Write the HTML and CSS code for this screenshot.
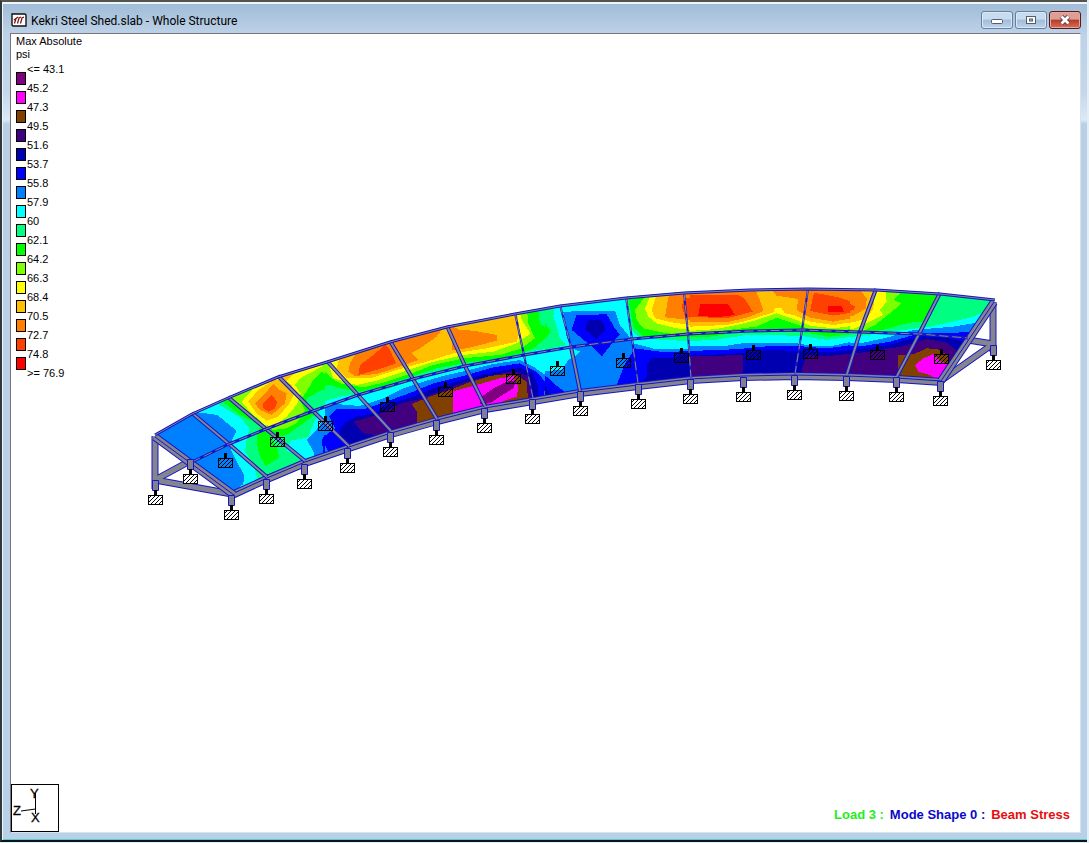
FILE: index.html
```
<!DOCTYPE html>
<html lang="en">
<head>
<meta charset="utf-8">
<title>Kekri Steel Shed.slab - Whole Structure</title>
<link rel="stylesheet" href="styles.css">
</head>
<body>
<div class="window">
  <header class="titlebar">
    <svg class="app-icon" viewBox="0 0 16 14" aria-hidden="true">
      <path d="M1 1H14L15 2V13H2L1 12Z" fill="#fff" stroke="#111" stroke-width="1.4"/>
      <path d="M3 7L7 4M3.500 10.500L5 5.500M6.500 10.500L8 5 10 4M9.500 10.500L11 5 13 4" fill="none" stroke="#7c1010" stroke-width="1.200"/>
    </svg>
    <h1 class="title">Kekri Steel Shed.slab - Whole Structure</h1>
    <div class="controls">
      <button class="control" type="button" aria-label="Minimize"><svg viewBox="0 0 12 10"><rect x=".5" y="4.500" width="11" height="4" rx="1" fill="#fff" stroke="#555d6b"/></svg></button>
      <button class="control" type="button" aria-label="Maximize"><svg viewBox="0 0 12 10"><rect x="1.500" y="1.500" width="9" height="7" fill="#fff" stroke="#555d6b"/><rect x="4.500" y="4" width="3" height="2" fill="#9db8d6" stroke="#555d6b"/></svg></button>
      <button class="control close" type="button" aria-label="Close"><svg viewBox="0 0 12 10"><path d="M2.500 1.500l7 7M9.500 1.500l-7 7" stroke="#54383c" stroke-width="4.500"/><path d="M2.500 1.500l7 7M9.500 1.500l-7 7" stroke="#fff" stroke-width="2.800"/></svg></button>
    </div>
  </header>
  <main class="view">
    <svg class="model" viewBox="11 34 1069 798" preserveAspectRatio="xMidYMid meet" role="img" aria-label="Beam stress contours on the curved slab">
      <defs>
        <pattern id="hatch" width="4" height="4" patternUnits="userSpaceOnUse"><path d="M-1 5L5 -1M-1 1L1 -1M3 5L5 3" stroke="#000" stroke-width="1"/></pattern>
        <g id="box"><rect x="-6.500" y="-4.500" width="14" height="9" fill="url(#hatch)" stroke="#000"/><rect x="-1" y="-10" width="3" height="6" fill="#000"/></g>
        <g id="foot"><path d="M-2.500 -19.500H3.500V-9.500H-2.500Z" fill="#808090" stroke="#1414c8"/><rect x="-6.500" y="-4.500" width="14" height="9" fill="#fff"/><use href="#box"/></g>
        <clipPath id="surface"><path d="M155 434L192 413 228 397 278 376 327 361 390 341 447 326 515 313 560 305 626 297 684 292 750 290 808 289 876 289 940 293 995 300 940 380 897 376 847 374 743 374 691 378 638 383 580 391 533 398 485 406 437 419 391 431 349 446 305 461 267 477 232 494Z"/></clipPath>
        <clipPath id="c1"><rect x="0" y="0" width="556" height="500"/></clipPath>
        <clipPath id="c2"><rect x="15" y="0" width="661" height="500"/></clipPath>
        <clipPath id="c3"><rect x="135" y="0" width="436" height="450"/></clipPath>
        <clipPath id="c4"><rect x="90" y="0" width="481" height="400"/></clipPath>
        <clipPath id="c5"><rect x="90" y="0" width="500" height="400"/></clipPath>
        <path id="rim" d="M155 435L192 414 228 398 278 377 327 362 390 342 447 327 515 314 560 306 626 298 684 293 750 290 808 289 876 290 940 294 995 300"/>
        <path id="mid" d="M192 462L229 444 266 429 313 411 358 395 413 379 465 366 524 355 571 347 632 339 688 334 750 331 802 330 860 332 919 334 968 338"/>
        <path id="front" d="M232 495L267 479 305 463 349 448 391 434 437 421 485 409 533 401 580 393 638 386 691 380 743 377 795 376 847 377 897 379 942 382"/>
        <path id="ribs" d="M192 413L229 444 267 477M228 397L266 429 305 461M278 376L313 411 349 446M327 361L358 395 391 431M390 341L413 379 437 419M447 326L465 366 485 406"/>
        <path id="thin-ribs" d="M515 313L524 355 533 398M560 305L571 347M626 297L632 339 638 383M684 292L688 334 691 378M808 289L802 330 795 374"/>
        <path id="right-ribs" d="M571 347L580 391M876 289L860 332 847 374M940 293L919 334 897 376"/>
        <path id="frames" d="M155 436V489M155 480L190 461M155 480L232 494M993 302V352M968 340L993 344 942 380"/>
        <path id="ends" d="M155 437L234 495M994 302L941 381"/>
      </defs>

      <g clip-path="url(#surface)" shape-rendering="crispEdges">
        <g transform="translate(140 360) scale(.33333)"><g clip-path="url(#c1)">
          <path class="azure" d="M0 0H700V500H0Z"/>
          <path class="cyan" d="M160 155L232 165 260 188 290 212 276 240 270 262 288 300 312 345 310 372 280 395 360 400 700 395V-40H230Z"/>
          <path class="spring" d="M222 125L300 172 328 205 318 245 316 275 340 315 350 345 358 370 440 340 500 300 470 285 438 272 452 242 505 232 520 190 540 150 575 135 620 110 700 100V-20H300Z"/>
          <path class="green" d="M236 115L300 165 340 185 360 200 350 222 352 255 358 285 378 318 418 292 412 265 395 235 440 225 490 190 530 160 505 150 500 115 545 90 600 92 700 90V-30H300Z"/>
          <path class="lime" d="M262 105L310 150 350 190 400 210 440 205 470 190 495 150 480 120 500 95 520 60 545 35 570 60 600 70V0H400Z"/>
          <path class="yellow" d="M305 125L345 80 410 40 550 0 545 20 480 55 465 75 482 100 470 135 440 170 400 200 375 195 330 155Z"/>
          <path class="gold" d="M325 125L355 90 400 60 430 60 455 75 465 95 445 135 415 170 380 182 350 160Z"/>
          <path class="gold" d="M415 45L470 35 440 62Z"/>
          <path class="orange" d="M345 130L375 100 400 72 420 90 440 100 435 130 395 165 360 150Z"/>
          <path class="ember" d="M368 130L395 105 412 125 405 145 385 155 370 145Z"/>
          <path class="azure" d="M575 140L555 175 525 215 500 238 520 275 530 310 640 250V140Z"/>
          <path class="blue" d="M590 165L560 215 545 240 552 290 600 270Z"/>
        </g></g>

        <g transform="translate(320 300) scale(.33333)"><g clip-path="url(#c2)">
          <path class="cyan" d="M-10 0H730V500H-10Z"/>
          <path class="spring" d="M-10 310L60 290 130 280 200 268 270 245 350 222 440 200 530 185 610 168 650 150 700 145 720 110 690 80 680 40 690 0H-10Z"/>
          <path class="green" d="M-10 262L30 255 60 265 120 275 200 255 290 225 350 205 440 188 540 175 600 160 640 145 665 125 695 100 660 70 650 0H-10Z"/>
          <path class="lime" d="M5 170L15 215 35 235 60 250 130 262 190 248 270 222 340 195 430 175 540 165 605 145 645 115 625 70 618 0Z"/>
          <path class="yellow" d="M20 175L40 235 110 255 170 242 260 212 330 188 430 165 520 155 590 130 632 100 605 60 590 0Z"/>
          <path class="gold" d="M60 165L50 205 80 235 150 235 230 210 320 185 400 160 500 145 590 125 600 95 585 0Z"/>
          <path class="orange" d="M120 140L90 190 85 215 105 228 170 222 240 200 295 180 275 158 300 145 350 110 378 70 210 110Z"/>
          <path class="orange" d="M380 70L420 90 460 92 530 105V122L440 145 395 150V115Z"/>
          <path class="ember" d="M195 135L160 165 120 195 115 225 185 205 228 190 210 150Z"/>
          <path class="azure" d="M-10 350L15 318 48 312 120 318 190 295 250 265 300 248 380 225 440 212 520 192 600 180 640 200 690 235 720 270V500H-10Z"/>
          <path class="blue" d="M48 328L28 350 45 385 5 415 22 450 60 500H690L672 275 690 262 650 215 600 190 520 202 440 225 340 250 280 275 190 308 130 328Z"/>
          <path class="navy" d="M75 368L60 388 62 412 88 450H640L655 265 640 220 600 203 530 215 440 236 340 265 280 290 200 315 170 338 110 350Z"/>
          <path class="indigo" d="M100 365L170 345 250 308 290 300 350 278 440 245 530 223 580 213 625 228 638 310 490 340 200 410 130 400Z"/>
          <path class="brown" d="M275 312L330 290 395 268 440 250 510 228 580 220 620 245 625 310 500 345 290 380V335Z"/>
          <path class="magenta" d="M400 290L395 275 470 255 540 235 580 228 595 260 590 290 560 300 490 330 400 340Z"/>
          <path class="purple" d="M485 290L520 265 560 245 590 240 580 265 540 290 510 310 480 312Z"/>
        </g></g>

        <g transform="translate(500 280) scale(.33333)"><g clip-path="url(#c3)">
          <path class="azure" d="M0 0H700V500H0Z"/>
          <path class="cyan" d="M100 0H600V208H530L470 208 400 190 395 172 375 165 360 135 345 92 190 95 200 170 215 205 240 215 225 230 205 240 185 270 110 275Z"/>
          <path class="azure" d="M190 95H345L360 135 390 172 395 182 215 203 200 170Z"/>
          <path class="spring" d="M100 60H165L160 110 172 145 180 175 200 195 80 222Z"/>
          <path class="green" d="M100 60H140L130 120 152 155 130 185 135 205 90 215Z"/>
          <path class="blue" d="M100 282L140 290 160 310 180 325 200 340 100 370Z"/>
          <path class="navy" d="M90 300L130 308 155 350 80 360Z"/>
          <path class="spring" d="M378 30L388 100 395 150 420 175 500 180 600 185V30Z"/>
          <path class="green" d="M380 30L400 140 430 170 500 172 600 170V30Z"/>
          <path class="lime" d="M450 30L405 90 410 120 430 145 500 160 600 165V30Z"/>
          <path class="yellow" d="M450 30V48L435 85 445 110 470 130 530 145 600 152V30Z"/>
          <path class="gold" d="M475 30L455 90 465 115 520 128 565 134 600 136V30Z"/>
          <path class="orange" d="M510 30L500 80 495 112 550 118 600 125V30Z"/>
          <path class="ember" d="M552 55L545 80 555 110 600 120V55Z"/>
          <path class="blue" d="M405 205L480 215 530 215 600 210V340H340L360 290 375 250Z"/>
          <path class="navy" d="M455 235H520L560 220 600 215V320L420 312 440 290V255Z"/>
          <path class="indigo" d="M566 225H600V310L575 295Z"/>
          <path class="blue" d="M230 105L320 103 345 145 360 165 340 185 305 230 270 195 215 150Z"/>
          <path class="navy" d="M265 120H305L318 150 290 178 255 148Z"/>
        </g></g>

        <g transform="translate(660 275) scale(.33333)"><g clip-path="url(#c4)">
          <path class="cyan" d="M0 0H620V400H0Z"/>
          <path class="spring" d="M0 195L90 198 160 195 260 180 420 182 500 195 600 182V0H0Z"/>
          <path class="green" d="M0 180L100 185 150 185 250 170 420 170 510 185 600 175V0H0Z"/>
          <path class="lime" d="M0 170L100 174 180 168 230 162 290 155 350 128 410 148 440 160 520 168 600 160V0H0Z"/>
          <path class="yellow" d="M0 165L90 168 170 162 230 150 290 135 350 115 410 135 450 152 520 160 600 150V0H0Z"/>
          <path class="gold" d="M0 150L90 155 200 150 250 140 290 128 340 112 345 100 365 100 375 115 400 120 450 140 520 150 600 138V0H0Z"/>
          <path class="orange" d="M80 140L200 142 260 128 310 108 300 75 275 20H80Z"/>
          <path class="orange" d="M310 20L350 62 415 72 410 105 450 128 520 140 600 125V20Z"/>
          <path class="ember" d="M70 60H235L255 72 278 110 200 130 90 125Z"/>
          <path class="red" d="M120 88H205L225 120 170 127 115 122Z"/>
          <path class="ember" d="M462 53L540 68 585 85 580 112 520 122 450 108Z"/>
          <path class="red" d="M505 92H545L552 112H505Z"/>
          <path class="azure" d="M0 215L200 212 260 203H400L450 212 520 212 600 195V400H0Z"/>
          <path class="blue" d="M0 230L90 228 200 224 260 220 300 215 400 212 500 220 600 207V400H0Z"/>
          <path class="navy" d="M0 235L90 240 200 238 330 225 420 228 500 232 600 223V400H0Z"/>
          <path class="indigo" d="M75 245L250 240V320H75Z"/>
          <path class="indigo" d="M440 240L500 244 600 233V320H440L425 285Z"/>
        </g></g>

        <g transform="translate(820 275) scale(.33333)"><g clip-path="url(#c5)">
          <path class="spring" d="M0 0H600V400H0Z"/>
          <path class="cyan" d="M0 190L100 185 180 175 250 165 330 155 400 140 460 125 520 100V400H0Z"/>
          <path class="green" d="M0 178L60 170 130 176 200 162 240 150 290 140 308 140 350 80 368 20H0Z"/>
          <path class="lime" d="M245 20V50L220 75 245 85 210 115 165 150 130 168 0 170V20Z"/>
          <path class="yellow" d="M195 20L200 80 180 105 190 120 140 145 100 162 0 165V20Z"/>
          <path class="gold" d="M165 20L160 100 140 130 100 142 0 150V20Z"/>
          <path class="orange" d="M0 20H100L140 70 138 100 100 122 0 128Z"/>
          <path class="ember" d="M60 70L105 95 100 105 50 118 0 115Z"/>
          <path class="azure" d="M0 208L130 203 200 188 280 165 340 160 400 155 460 145 500 135V400H0Z"/>
          <path class="blue" d="M0 218L130 213 210 200 280 180 350 174 440 172 500 170V400H0Z"/>
          <path class="navy" d="M0 230L120 222 200 212 260 195 310 184 380 188 430 200 470 210V400H0Z"/>
          <path class="indigo" d="M0 240L110 235 170 226 240 216 320 192 380 203 408 225 402 260 380 330H0Z"/>
          <path class="brown" d="M235 240L280 238 320 220 350 222 385 240 388 270 375 330H235Z"/>
          <path class="magenta" d="M285 270L310 250 340 237 365 260 388 270 375 330 330 300 295 290Z"/>
        </g></g>
      </g>

      <g fill="none" stroke-linejoin="round">
        <use href="#frames" class="edge-5"/><use href="#frames" class="core-3"/>
        <use href="#front" class="edge-7"/><use href="#front" class="core-5"/>
        <use href="#front" class="edge-line" transform="translate(0 -1)"/>
        <use href="#ends" class="edge-7"/><use href="#ends" class="core-5"/><use href="#ends" class="edge-line"/>
        <use href="#ribs" class="edge-4"/><use href="#ribs" class="core-2"/>
        <use href="#right-ribs" class="edge-4"/><use href="#right-ribs" class="core-2"/>
        <use href="#thin-ribs" class="edge-2"/><use href="#thin-ribs" class="core-dash"/>
        <use href="#rim" class="edge-3"/><use href="#rim" class="core-1"/>
        <use href="#mid" class="edge-3"/><use href="#mid" class="core-dash"/>
      </g>

      <g>
        <use href="#foot" x="155" y="500"/><use href="#foot" x="190" y="479"/><use href="#foot" x="231" y="515"/><use href="#foot" x="266" y="499"/><use href="#foot" x="304" y="484"/><use href="#foot" x="347" y="468"/><use href="#foot" x="390" y="452"/><use href="#foot" x="436" y="440"/><use href="#foot" x="484" y="428"/><use href="#foot" x="532" y="419"/><use href="#foot" x="580" y="411"/><use href="#foot" x="638" y="404"/><use href="#foot" x="690" y="399"/><use href="#foot" x="743" y="397"/><use href="#foot" x="794" y="395"/><use href="#foot" x="846" y="396"/><use href="#foot" x="896" y="397"/><use href="#foot" x="940" y="401"/><use href="#foot" x="993" y="365"/>
      </g>
      <g>
        <use href="#box" x="225" y="463"/><use href="#box" x="277" y="442"/><use href="#box" x="325" y="426"/><use href="#box" x="387" y="407"/><use href="#box" x="445" y="392"/><use href="#box" x="513" y="379"/><use href="#box" x="557" y="371"/><use href="#box" x="623" y="363"/><use href="#box" x="681" y="358"/><use href="#box" x="753" y="355"/><use href="#box" x="810" y="354"/><use href="#box" x="877" y="355"/><use href="#box" x="941" y="359"/>
      </g>
    </svg>

    <section class="legend">
      <p class="legend-head">Max Absolute</p>
      <p class="legend-head">psi</p>
      <ul class="scale">
        <li class="purple">&lt;= 43.1</li><li class="magenta">45.2</li><li class="brown">47.3</li><li class="indigo">49.5</li><li class="navy">51.6</li><li class="blue">53.7</li><li class="azure">55.8</li><li class="cyan">57.9</li><li class="spring">60</li><li class="green">62.1</li><li class="lime">64.2</li><li class="yellow">66.3</li><li class="gold">68.4</li><li class="orange">70.5</li><li class="ember">72.7</li><li class="red">74.8</li><li class="last">&gt;= 76.9</li>
      </ul>
    </section>

    <footer class="status">
      <svg class="axes" viewBox="0 0 48 48" role="img" aria-label="Y, Z and X axes">
        <rect x=".5" y=".5" width="47" height="47" fill="#fff" stroke="#000"/>
        <path d="M24.500 9V25L10 27M24.500 25V30" fill="none" stroke="#000"/>
        <text x="19" y="14">Y</text><text x="2" y="31">Z</text><text x="20" y="38">X</text>
      </svg>
      <p class="caption"><span class="load">Load 3 :</span><span class="mode">Mode Shape 0 :</span><span class="result">Beam Stress</span></p>
    </footer>
  </main>
</div>
</body>
</html>
```
FILE: styles.css
```
*, *::before { box-sizing: border-box; }
body {
  margin: 0;
  height: 100vh;
  background: #e4eef5;
  font-family: "Liberation Sans", Arial, sans-serif;
  color: #000;
}
.window {
  display: flex;
  flex-direction: column;
  height: calc(100vh - 1px);
  margin-right: 2px;
  padding: 0 6px 7px 8px;
  border-top: 2px solid #55554f;
  border-left: 2px solid #30383a;
  border-bottom: 2px solid #06181c;
  background: linear-gradient(#9fbbd6 0, #bdd2e8 32px, #c4d7ea 90px, #dce9f6 118px, #b9cfe6 122px, #b9d1e8 100%);
  box-shadow: inset 1px 2px 0 #eef5fb, inset 0 -1px 0 #62c6c8;
}
.titlebar {
  display: flex;
  align-items: center;
  flex: none;
  height: 31px;
  padding: 5px 0 0 1px;
}
.app-icon { width: 16px; height: 14px; }
.title {
  flex: 1;
  margin: 0 0 0 4px;
  padding-top: 2px;
  font: 12px/16px Roboto, "Noto Sans", sans-serif;
}
.controls { display: flex; gap: 2px; }
.control {
  display: grid;
  place-items: center;
  width: 32px;
  height: 18px;
  padding: 0;
  border: 1px solid #64809f;
  border-radius: 3px;
  background: linear-gradient(#c9dcef 0 45%, #a0bcd9 50%, #bdd4ea);
  box-shadow: inset 0 0 0 1px #dbe8f5;
}
.control svg { width: 12px; height: 10px; }
.close {
  border-color: #57191c;
  background: linear-gradient(#dd9f93 0 45%, #b93a28 50%, #d5705b);
  box-shadow: inset 0 0 0 1px #e5a99c;
}
.view {
  position: relative;
  display: flex;
  flex-direction: column;
  justify-content: space-between;
  flex: 1;
  min-height: 0;
  border: 1px solid #d9e1ea;
  border-top-color: #77777b;
  border-left-color: #77777b;
  background: #fff;
}
.model { position: absolute; inset: 0; width: 100%; height: 100%; }
.legend { position: relative; padding: 1px 0 0 5px; font-size: 11px; }
.legend-head { margin: 0; line-height: 13px; }
.scale { margin: 2px 0 0; padding: 0; list-style: none; }
.scale li { position: relative; height: 19px; padding-left: 11px; line-height: 13px; }
.scale li::before {
  content: "";
  position: absolute;
  left: 0;
  top: 9px;
  width: 10px;
  height: 13px;
  border: 1px solid #000;
  background: var(--tone);
}
.scale .last::before { display: none; }
.purple { --tone: #800080; }
.magenta { --tone: #ff00ff; }
.brown { --tone: #804000; }
.indigo { --tone: #400080; }
.navy { --tone: #0000b0; }
.blue { --tone: #0000ff; }
.azure { --tone: #0080ff; }
.cyan { --tone: #00ffff; }
.spring { --tone: #00ff80; }
.green { --tone: #00ff00; }
.lime { --tone: #80ff00; }
.yellow { --tone: #ffff00; }
.gold { --tone: #ffc000; }
.orange { --tone: #ff8000; }
.ember { --tone: #ff4000; }
.red { --tone: #ff0000; }
path[class] { fill: var(--tone); }
.edge-7, .edge-5, .edge-4, .edge-3, .edge-2, .edge-line { stroke: #1414c8; }
.edge-7 { stroke-width: 8px; }
.edge-5 { stroke-width: 7px; }
.edge-4 { stroke-width: 4px; }
.edge-3 { stroke-width: 3px; }
.edge-2 { stroke-width: 2px; }
.edge-line { stroke-width: 1px; }
.core-5, .core-3, .core-2, .core-1, .core-dash { stroke: #858590; }
.core-5 { stroke-width: 6px; }
.core-3 { stroke-width: 5px; }
.core-2 { stroke-width: 2px; }
.core-1, .core-dash { stroke-width: 1px; }
.core-dash { stroke-dasharray: 9px 4px; }
.status {
  position: relative;
  display: flex;
  align-items: flex-end;
  justify-content: space-between;
  padding-right: 10px;
}
.axes { width: 48px; height: 48px; }
.axes text { font-size: 13px; stroke: #000; stroke-width: .3px; }
.caption {
  display: flex;
  gap: 6px;
  margin: 0 0 9px;
  font-size: 13px;
  font-weight: bold;
  line-height: 16px;
}
.load { color: #22ee22; }
.mode { color: #0808cc; }
.result { color: #e60e0e; }
```
